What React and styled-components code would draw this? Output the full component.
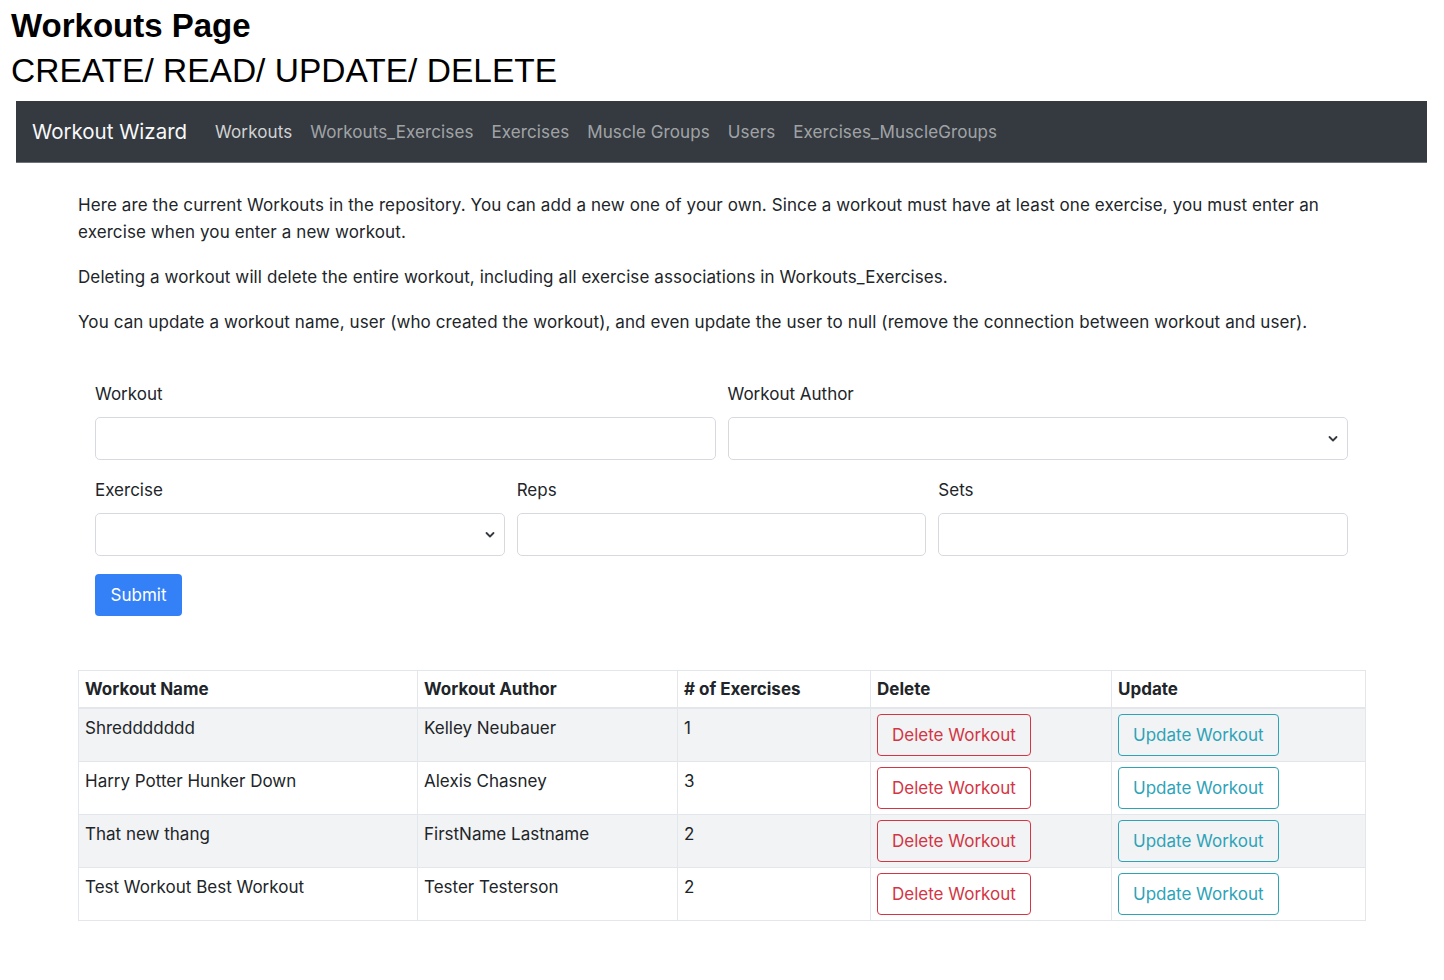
import React from "react";
import styled, { createGlobalStyle } from "styled-components";

const Global = createGlobalStyle`
  html, body { margin: 0; padding: 0; background: #fff; }
  body { font-family: Inter, Roboto, "Liberation Sans", sans-serif; color: #212529; }
  * { box-sizing: border-box; }
`;

const Page = styled.div`
  width: 1444px;
  padding-top: 6px;
`;

const DocTitle = styled.h1`
  margin: 0 0 0 11px;
  font-family: "Liberation Sans", Arial, sans-serif;
  font-weight: 700;
  font-size: 33px;
  line-height: 40px;
  color: #000;
`;

const DocSubtitle = styled.h2`
  margin: 6px 0 0 11px;
  font-family: "Liberation Sans", Arial, sans-serif;
  font-weight: 400;
  font-size: 33.5px;
  line-height: 38px;
  color: #000;
`;

const Nav = styled.nav`
  margin: 11px 17px 0 16px;
  height: 62px;
  background: #343a40;
  display: flex;
  align-items: center;
  padding-left: 16px;
  border-bottom: 1px solid #6c757d;
`;

const Brand = styled.a`
  font-size: 20.5px;
  color: #f8f9fa;
  margin-right: 19px;
  text-decoration: none;
`;

const NavLink = styled.a`
  font-size: 17px;
  letter-spacing: 0.1px;
  padding: 0 9px;
  color: ${(p) => (p.$active ? "rgba(255,255,255,0.78)" : "rgba(255,255,255,0.55)")};
  text-decoration: none;
`;

const Container = styled.main`
  width: 1287px;
  margin: 0 0 0 78px;
  padding-top: 29px;
`;

const Para = styled.p`
  margin: 0 0 18px;
  font-size: 17px;
  letter-spacing: 0.1px;
  line-height: 27px;
  color: #212529;
`;

const Form = styled.form`
  margin: 46px 17px 0;
`;

const Row = styled.div`
  display: grid;
  grid-template-columns: repeat(${(p) => p.$cols}, 1fr);
  column-gap: 12px;
  margin-bottom: 18px;
`;

const Field = styled.div`
  display: flex;
  flex-direction: column;
`;

const Label = styled.label`
  font-size: 17px;
  line-height: 25px;
  margin-bottom: 10px;
  color: #212529;
`;

const Input = styled.div`
  height: 43px;
  border: 1px solid #d6dadf;
  border-radius: 5px;
  background: #fff;
  position: relative;
`;

const Chevron = styled.svg`
  position: absolute;
  right: 9px;
  top: 17px;
`;

const Submit = styled.button`
  display: block;
  height: 42px;
  width: 87px;
  border: none;
  border-radius: 4px;
  background: #3480f6;
  color: #fff;
  font-family: inherit;
  font-size: 17px;
  margin-top: 1px;
`;

const Table = styled.table`
  margin-top: 54px;
  width: 1287px;
  border-collapse: collapse;
  table-layout: fixed;
  font-size: 17px;
`;

const Th = styled.th`
  width: ${(p) => p.$w}px;
  text-align: left;
  font-weight: 700;
  height: 37px;
  padding: 0 6px;
  border: 1px solid #e3e6ea;
  border-bottom: 2px solid #e3e6ea;
  color: #212529;
`;

const Tr = styled.tr`
  background: ${(p) => (p.$odd ? "#f2f3f4" : "#fff")};
  height: 53px;
`;

const Td = styled.td`
  vertical-align: top;
  padding: 7px 6px 0;
  line-height: 25px;
  border: 1px solid #e3e6ea;
  color: #212529;
`;

const BtnTd = styled(Td)`
  padding: 5px 6px 5px;
`;

const OutlineBtn = styled.button`
  height: 42px;
  padding: 0 14px;
  background: transparent;
  border: 1px solid ${(p) => p.$color};
  color: ${(p) => p.$color};
  border-radius: 4px;
  font-family: inherit;
  font-size: 17px;
`;

const rows = [
  ["Shreddddddd", "Kelley Neubauer", "1"],
  ["Harry Potter Hunker Down", "Alexis Chasney", "3"],
  ["That new thang", "FirstName Lastname", "2"],
  ["Test Workout Best Workout", "Tester Testerson", "2"],
];

const ChevronIcon = () => (
  <Chevron width="10" height="8" viewBox="0 0 10 8">
    <path d="M1.5 2 L5 5.5 L8.5 2" fill="none" stroke="#343a40" strokeWidth="1.8" strokeLinecap="round" strokeLinejoin="round" />
  </Chevron>
);

export default function App() {
  return (
    <Page>
      <Global />
      <DocTitle>Workouts Page</DocTitle>
      <DocSubtitle>CREATE/ READ/ UPDATE/ DELETE</DocSubtitle>
      <Nav>
        <Brand>Workout Wizard</Brand>
        <NavLink $active>Workouts</NavLink>
        <NavLink>Workouts_Exercises</NavLink>
        <NavLink>Exercises</NavLink>
        <NavLink>Muscle Groups</NavLink>
        <NavLink>Users</NavLink>
        <NavLink>Exercises_MuscleGroups</NavLink>
      </Nav>
      <Container>
        <Para>
          Here are the current Workouts in the repository. You can add a new one of your own. Since a workout must have at least one exercise, you must enter an exercise when you enter a new workout.
        </Para>
        <Para>
          Deleting a workout will delete the entire workout, including all exercise associations in Workouts_Exercises.
        </Para>
        <Para>
          You can update a workout name, user (who created the workout), and even update the user to null (remove the connection between workout and user).
        </Para>
        <Form>
          <Row $cols={2}>
            <Field>
              <Label>Workout</Label>
              <Input />
            </Field>
            <Field>
              <Label>Workout Author</Label>
              <Input>
                <ChevronIcon />
              </Input>
            </Field>
          </Row>
          <Row $cols={3}>
            <Field>
              <Label>Exercise</Label>
              <Input>
                <ChevronIcon />
              </Input>
            </Field>
            <Field>
              <Label>Reps</Label>
              <Input />
            </Field>
            <Field>
              <Label>Sets</Label>
              <Input />
            </Field>
          </Row>
          <Submit type="button">Submit</Submit>
        </Form>
        <Table>
          <thead>
            <tr>
              <Th $w={339}>Workout Name</Th>
              <Th $w={260}>Workout Author</Th>
              <Th $w={193}># of Exercises</Th>
              <Th $w={241}>Delete</Th>
              <Th $w={254}>Update</Th>
            </tr>
          </thead>
          <tbody>
            {rows.map((r, i) => (
              <Tr key={i} $odd={i % 2 === 0}>
                <Td>{r[0]}</Td>
                <Td>{r[1]}</Td>
                <Td>{r[2]}</Td>
                <BtnTd>
                  <OutlineBtn $color="#d33545">Delete Workout</OutlineBtn>
                </BtnTd>
                <BtnTd>
                  <OutlineBtn $color="#2da3b8">Update Workout</OutlineBtn>
                </BtnTd>
              </Tr>
            ))}
          </tbody>
        </Table>
      </Container>
    </Page>
  );
}
